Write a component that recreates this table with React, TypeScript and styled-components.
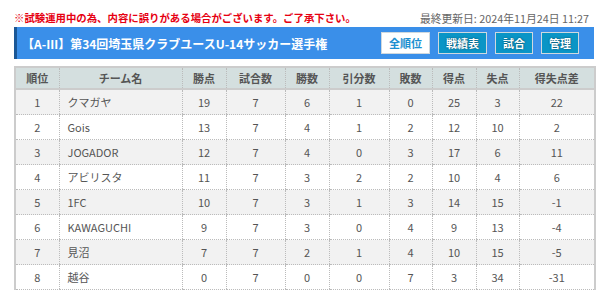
import styled, { createGlobalStyle } from "styled-components";

const GlobalStyle = createGlobalStyle`
  body {
    margin: 0;
    background: #fff;
    font-family: "Noto Sans CJK JP", "Noto Sans", sans-serif;
  }
`;

const Page = styled.div`
  width: 580px;
  padding: 8px 0 0 14px;
`;

const TopLine = styled.div`
  display: flex;
  justify-content: space-between;
  align-items: center;
  height: 19px;
`;

const Notice = styled.span`
  color: #e60012;
  font-size: 10.4px;
  font-weight: bold;
`;

const Updated = styled.span`
  color: #666;
  font-size: 10.8px;
  margin-right: 5px;
`;

const TitleBar = styled.div`
  display: flex;
  align-items: center;
  justify-content: space-between;
  height: 32px;
  background: #3a8fe9;
  border-left: 3px solid #1b5796;
  padding: 0 15px 0 5px;
`;

const Title = styled.h1`
  margin: 0;
  color: #fff;
  font-size: 12px;
  font-weight: bold;
`;

const Nav = styled.div`
  display: flex;
  gap: 8px;
`;

const NavButton = styled.a<{ $active?: boolean }>`
  display: flex;
  align-items: center;
  justify-content: center;
  height: 22px;
  padding: 0 7px;
  box-sizing: border-box;
  border: 1px solid #cfd8de;
  background: ${(p) => (p.$active ? "#fff" : "#0a95c6")};
  color: ${(p) => (p.$active ? "#1b8fd0" : "#fff")};
  font-size: 11px;
  font-weight: bold;
  text-decoration: none;
  text-shadow: ${(p) => (p.$active ? "none" : "0 0 2px rgba(0,0,0,0.6)")};
`;

const Table = styled.table`
  width: 580px;
  margin-top: 7px;
  border-collapse: collapse;
  table-layout: fixed;
  border-top: 2px solid #ccc;
  border-left: 2px solid #ccc;
  border-right: 2px solid #ccc;
  font-size: 11px;
  color: #555;
`;

const Th = styled.th`
  height: 20px;
  padding: 0;
  background: #d4dfdf;
  font-weight: bold;
  border-left: 1px dotted #bbb;
  border-bottom: 2px solid #ccc;
  text-align: center;
`;

const Row = styled.tr<{ $odd: boolean }>`
  background: ${(p) => (p.$odd ? "#f2f2f2" : "#fff")};
`;

const Td = styled.td<{ $left?: boolean }>`
  height: 24px;
  padding: 0 ${(p) => (p.$left ? "8px" : "0")};
  text-align: ${(p) => (p.$left ? "left" : "center")};
  border-left: 1px dotted #bbb;
  border-bottom: 1px dotted #bbb;
`;

const widths = [44, 123, 44, 59, 44, 60, 43, 44, 43, 76];
const heads = ["順位", "チーム名", "勝点", "試合数", "勝数", "引分数", "敗数", "得点", "失点", "得失点差"];

const rows: (string | number)[][] = [
  [1, "クマガヤ", 19, 7, 6, 1, 0, 25, 3, 22],
  [2, "Gois", 13, 7, 4, 1, 2, 12, 10, 2],
  [3, "JOGADOR", 12, 7, 4, 0, 3, 17, 6, 11],
  [4, "アビリスタ", 11, 7, 3, 2, 2, 10, 4, 6],
  [5, "1FC", 10, 7, 3, 1, 3, 14, 15, -1],
  [6, "KAWAGUCHI", 9, 7, 3, 0, 4, 9, 13, -4],
  [7, "見沼", 7, 7, 2, 1, 4, 10, 15, -5],
  [8, "越谷", 0, 7, 0, 0, 7, 3, 34, -31],
];

const App = () => (
  <Page>
    <GlobalStyle />
    <TopLine>
      <Notice>※試験運用中の為、内容に誤りがある場合がございます。ご了承下さい。</Notice>
      <Updated>最終更新日: 2024年11月24日 11:27</Updated>
    </TopLine>
    <TitleBar>
      <Title>【A-Ⅲ】第34回埼玉県クラブユースU-14サッカー選手権</Title>
      <Nav>
        <NavButton href="#" $active>全順位</NavButton>
        <NavButton href="#">戦績表</NavButton>
        <NavButton href="#">試合</NavButton>
        <NavButton href="#">管理</NavButton>
      </Nav>
    </TitleBar>
    <Table>
      <colgroup>
        {widths.map((w, i) => (
          <col key={i} style={{ width: w }} />
        ))}
      </colgroup>
      <thead>
        <tr>
          {heads.map((h) => (
            <Th key={h}>{h}</Th>
          ))}
        </tr>
      </thead>
      <tbody>
        {rows.map((r, i) => (
          <Row key={i} $odd={i % 2 === 0}>
            {r.map((c, j) => (
              <Td key={j} $left={j === 1}>
                {c}
              </Td>
            ))}
          </Row>
        ))}
      </tbody>
    </Table>
  </Page>
);

export default App;
